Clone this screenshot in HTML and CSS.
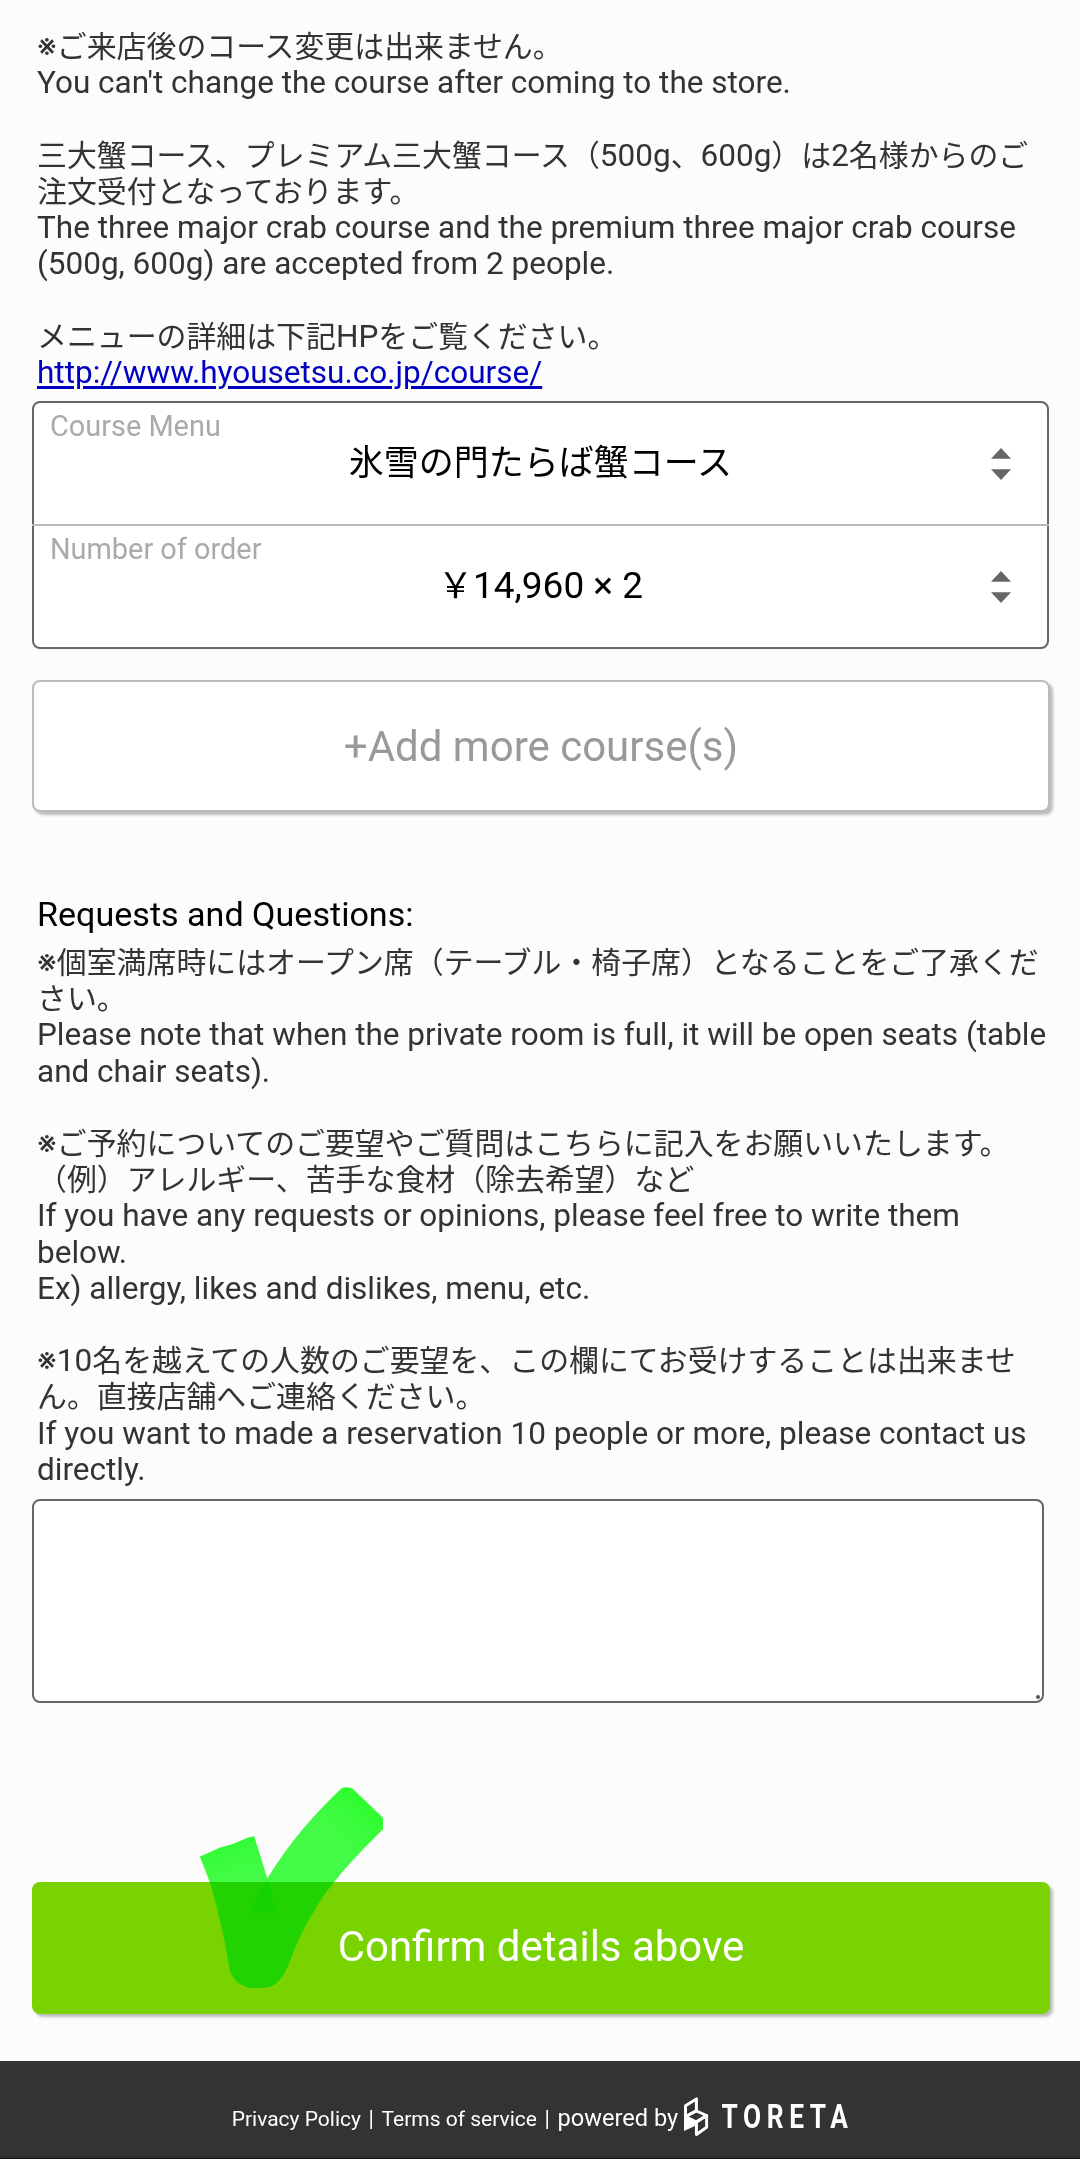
FILE: index.html
```html
<!DOCTYPE html>
<html lang="ja">
<head>
<meta charset="utf-8">
<title>Reservation</title>
<link rel="stylesheet" href="styles.css">
</head>
<body>
<main class="form">
  <p class="note"><span class="mark">※</span><span class="jp">ご来店後のコース変更は出来ません。</span><br>You can't change the course after coming to the store.<br><br><span class="jp">三大蟹コース、プレミアム三大蟹コース（</span>500g<span class="jp">、</span>600g<span class="jp">）は</span>2<span class="jp">名様からのご</span><br><span class="jp">注文受付となっております。</span><br>The three major crab course and the premium three major crab course<br>(500g, 600g) are accepted from 2 people.<br><br><span class="jp">メニューの詳細は下記</span>HP<span class="jp">をご覧ください。</span><br><a class="link" href="#">http://www.hyousetsu.co.jp/course/</a></p>

  <section class="course">
    <div class="field">
      <span class="field-label">Course Menu</span>
      <span class="field-value"><span class="value-jp">氷雪の門たらば蟹コース</span></span>
      <svg class="arrows" viewBox="0 0 20 32"><path d="M10 0 20 10.7H0zM10 32 20 21.3H0z"/></svg>
    </div>
    <div class="field">
      <span class="field-label">Number of order</span>
      <span class="field-value"><span class="value-jp">￥</span>14,960 × 2</span>
      <svg class="arrows" viewBox="0 0 20 32"><path d="M10 0 20 10.7H0zM10 32 20 21.3H0z"/></svg>
    </div>
  </section>

  <button class="button button-add" type="button">+Add more course(s)</button>

  <h2 class="heading">Requests and Questions:</h2>
  <p class="note"><span class="mark">※</span><span class="jp">個室満席時にはオープン席（テーブル・椅子席）となることをご了承くだ</span><br><span class="jp">さい。</span><br>Please note that when the private room is full, it will be open seats (table<br>and chair seats).<br><br><span class="mark">※</span><span class="jp">ご予約についてのご要望やご質問はこちらに記入をお願いいたします。</span><br><span class="jp">（例）アレルギー、苦手な食材（除去希望）など</span><br>If you have any requests or opinions, please feel free to write them<br>below.<br>Ex) allergy, likes and dislikes, menu, etc.<br><br><span class="mark">※</span>10<span class="jp">名を越えての人数のご要望を、この欄にてお受けすることは出来ませ</span><br><span class="jp">ん。直接店舗へご連絡ください。</span><br>If you want to made a reservation 10 people or more, please contact us<br>directly.</p>
  <div class="memo"><textarea class="memo-input" aria-label="Requests and Questions"></textarea><i class="grip"></i></div>

  <div class="confirm">
    <button class="button button-confirm" type="button"><span>Confirm details above</span></button>
    <svg class="check" viewBox="0 0 690 720">
      <defs>
        <linearGradient id="ink" gradientUnits="userSpaceOnUse" x1="570" y1="90" x2="450" y2="210">
          <stop offset="0" stop-color="#2dff2f"/><stop offset="1" stop-color="#45ff48"/>
        </linearGradient>
        <linearGradient id="tail" gradientUnits="userSpaceOnUse" x1="140" y1="225" x2="175" y2="325">
          <stop offset="0" stop-color="#33ff36"/><stop offset="1" stop-color="#33ff36" stop-opacity="0"/>
        </linearGradient>
      </defs>
      <path fill="url(#ink)" d="M60 260 120 233 160 222 200 205 222 199 262 325C330 215 405 130 485 55Q500 48 518 56L609 143V178C520 265 440 355 405 420C365 480 345 535 322 592Q295 654 250 654H210Q155 640 147 590C137 520 122 460 110 410C95 350 80 305 60 260Z"/>
      <path fill="url(#tail)" d="M60 260 120 233 160 222 200 205 222 199 262 325 90 340Z"/>
      <path fill="#17ff1c" opacity=".6" d="M262 325 290 430 212 426C220 395 240 355 262 325Z"/>
    </svg>
  </div>
</main>

<footer class="footer">
  <a class="foot-link">Privacy Policy</a><span class="bar">|</span><a class="foot-link">Terms of service</a><span class="bar">|</span><span class="powered">powered by</span>
  <svg class="logo" viewBox="0 0 166 42">
    <path class="logo-line" d="M1.5 10.7 12.4 3.9V15.7L1.5 21.5Z"/>
    <path class="logo-line" d="M1.5 21.5 12.4 16 22.6 20.5 12.4 27Z"/>
    <path class="logo-line" d="M12.4 27 22.6 20.5V32.3L12.4 39.4Z"/>
    <path class="logo-fill" d="M0 20.5 11.5 26 10.8 31 0 36Z"/>
    <text class="logo-text" x="47" y="33.3" textLength="158" lengthAdjust="spacing" transform="scale(.8 1)">TORETA</text>
  </svg>
</footer>
</body>
</html>
```
FILE: styles.css
```css
* { box-sizing: border-box; }

body {
  margin: 0;
  height: 2159px;
  display: flex;
  flex-direction: column;
  background: #fcfcfc;
  color: #333;
  font-family: Roboto, "Noto Sans CJK JP", sans-serif;
  overflow: hidden;
}

.form {
  flex: 1;
  display: flex;
  flex-direction: column;
  padding: 29px 0 0 32px;
}

.note {
  margin: 0 0 0 5px;
  font-size: 31.5px;
  line-height: 36.2px;
  white-space: nowrap;
}

.jp {
  font-family: "Noto Sans CJK JP", sans-serif;
  font-size: 29.9px;
  line-height: 0;
}

.mark {
  font-family: Inter, sans-serif;
  font-size: 31px;
  line-height: 0;
}

.link {
  color: #0000c0;
  text-decoration-thickness: 2.5px;
  text-underline-offset: 3px;
}

.course {
  width: 1017px;
  height: 248px;
  margin-top: 10px;
  display: grid;
  grid-template-rows: 121px 123px;
  border: 2px solid #666;
  border-radius: 8px;
  background: #fff;
}

.field {
  display: grid;
  grid-template: 1fr / 1fr;
  align-items: center;
}

.field > * { grid-area: 1 / 1; }

.field + .field {
  margin: 0 -2px;
  padding: 0 2px;
  border-top: 2px solid #bbb;
}

.field-label {
  align-self: start;
  margin: 6px 0 0 16px;
  font-size: 28.9px;
  line-height: 34px;
  color: #aaa;
}

.field-value {
  justify-self: center;
  margin-bottom: 2px;
  font-size: 37px;
  line-height: 44px;
  color: #000;
}

.value-jp {
  font-family: "Noto Sans CJK JP", sans-serif;
  font-size: 35px;
  line-height: 0;
}

.arrows {
  justify-self: end;
  width: 20px;
  height: 32px;
  margin: 0 36.5px 0 0;
  fill: #666;
}

.button {
  display: flex;
  align-items: center;
  justify-content: center;
  padding: 0;
  border-radius: 8px;
  box-shadow: 3px 3px 3px rgba(0, 0, 0, .25);
  font-family: inherit;
  font-size: 42px;
}

.button-add {
  width: 1018px;
  height: 132px;
  margin-top: 31px;
  border: 2px solid #bbb;
  background: #fff;
  color: #999;
}

.heading {
  margin: 80px 0 9px 5px;
  font-size: 34.1px;
  font-weight: 400;
  line-height: 44px;
  color: #000;
}

.memo {
  position: relative;
  width: 1012px;
  height: 204px;
  margin-top: 11.2px;
}

.memo-input {
  display: block;
  width: 100%;
  height: 100%;
  border: 2px solid #666;
  border-radius: 8px;
  background: #fff;
  resize: none;
}

.grip {
  position: absolute;
  right: 4px;
  bottom: 4px;
  width: 4px;
  height: 4px;
  border-radius: 50%;
  background: #555;
}

.confirm {
  position: relative;
  margin-top: 179px;
}

.button-confirm {
  width: 1018px;
  height: 132px;
  padding-bottom: 3px;
  border: 0;
  background: #78d300;
  color: #fff;
}

.check {
  position: absolute;
  left: 148px;
  top: -112px;
  width: 230px;
  height: 240px;
  mix-blend-mode: multiply;
}

.footer {
  height: 98px;
  display: flex;
  justify-content: center;
  align-items: baseline;
  gap: 7.6px;
  padding: 43px 0 0 2px;
  background: #333;
  border-bottom: 1px solid #111;
  color: #fff;
}

.foot-link { font-size: 21px; }
.bar { font-size: 22px; }
.powered { font-size: 23.6px; }

.logo {
  width: 166px;
  height: 42px;
  margin: -9px 0 0 -1.5px;
  align-self: start;
}

.logo-line {
  fill: none;
  stroke: #fff;
  stroke-width: 3;
  stroke-linejoin: round;
}

.logo-fill { fill: #fff; }

.logo-text {
  font: 700 32.8px Roboto, sans-serif;
  fill: #fff;
}
```
